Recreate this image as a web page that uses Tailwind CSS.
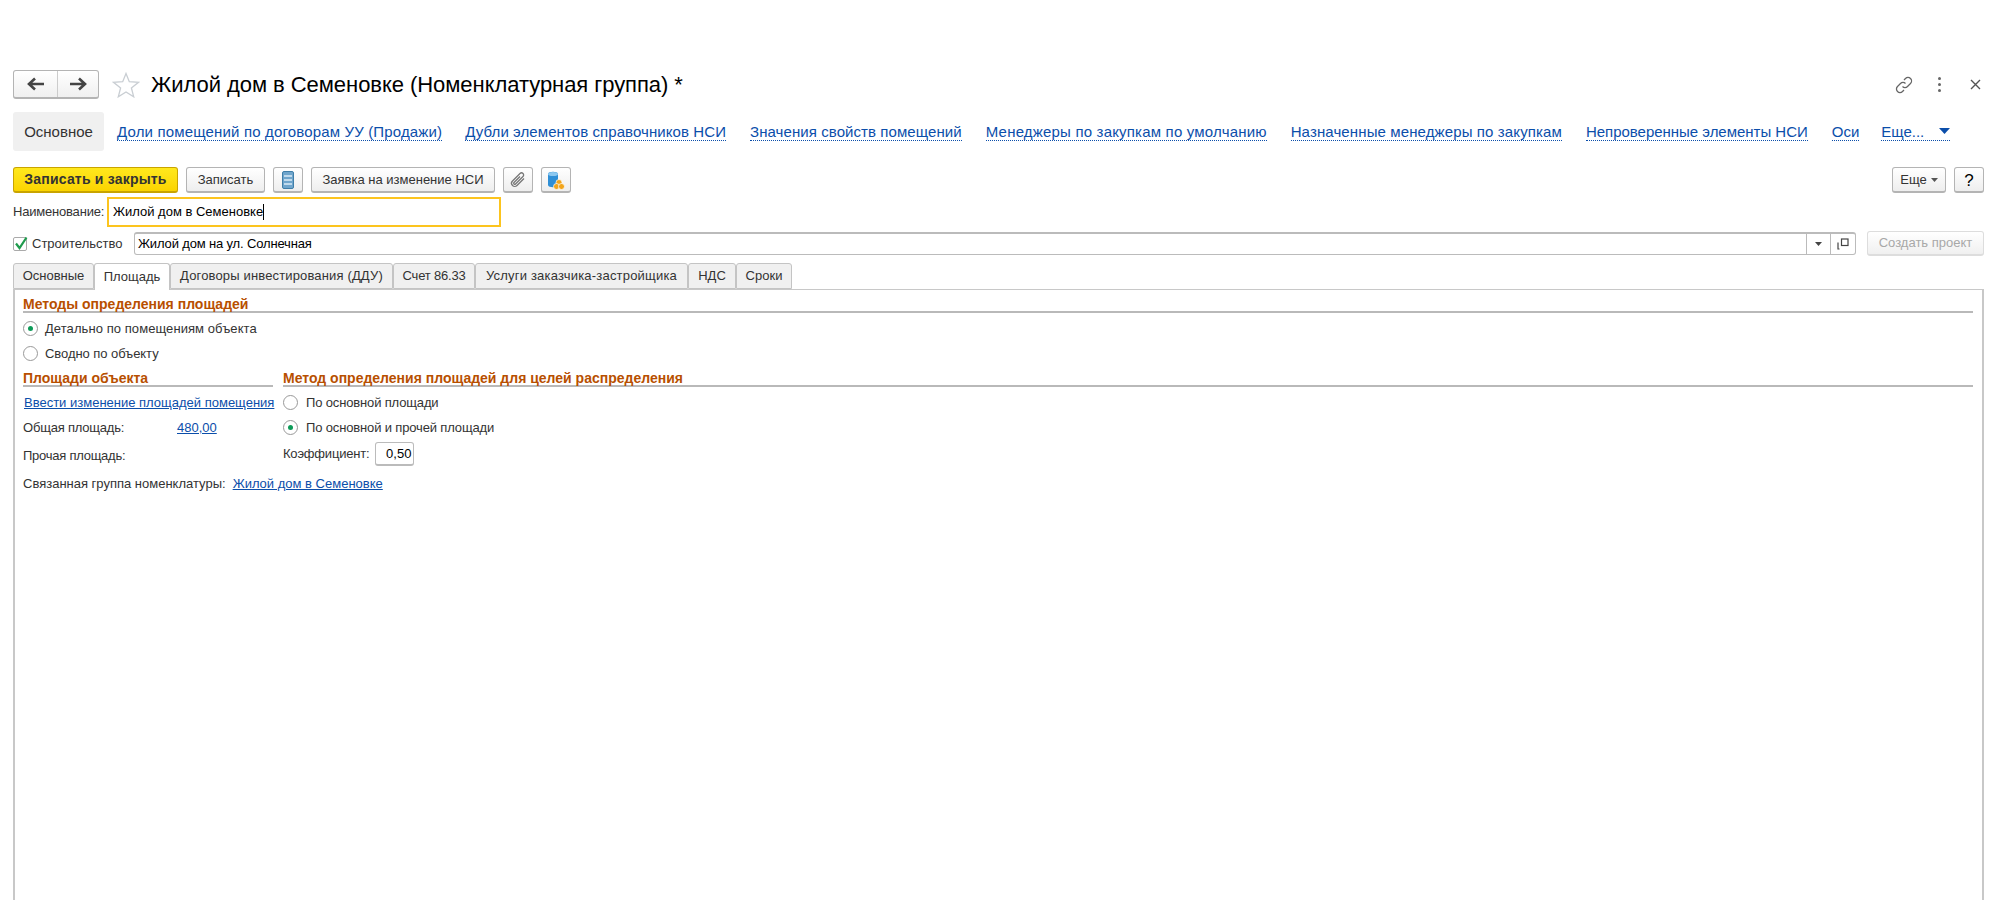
<!DOCTYPE html>
<html>

<head>
  <title>Жилой дом в Семеновке</title>
  <script src="https://cdn.jsdelivr.net/npm/@tailwindcss/browser@4"></script>
</head>

<body class="h-[900px] overflow-hidden bg-white font-['Liberation_Sans',Arial,sans-serif] text-[#333]">
  <div class="flex h-[900px] flex-col pl-[13px] pr-[16px] pt-[70px]">

    <!-- header -->
    <div class="flex h-[29px] items-center">
      <div class="flex h-[29px] w-[86px] rounded-[3px] border border-b-2 border-[#b4b4b4] bg-gradient-to-b from-white to-[#f0f0f0]">
        <div class="flex w-[44px] items-center justify-center border-r border-[#ccc]">
          <svg width="18" height="14" viewBox="0 0 18 14"><path d="M8 1.500 2 7l6 5.500M2.500 7H17" fill="none" stroke="#444" stroke-width="2.600"/></svg>
        </div>
        <div class="flex flex-1 items-center justify-center">
          <svg width="18" height="14" viewBox="0 0 18 14"><path d="M10 1.500 16 7l-6 5.500M15.500 7H1" fill="none" stroke="#444" stroke-width="2.600"/></svg>
        </div>
      </div>
      <svg class="ml-[13px]" width="28" height="26" viewBox="0 0 28 26"><path d="M14 1.500 17.300 9.700 26.500 10.300 19.400 16 21.700 24.800 14 20 6.300 24.800 8.600 16 1.500 10.300 10.700 9.700Z" fill="#fff" stroke="#c9ced3" stroke-width="1.300"/></svg>
      <h1 class="ml-[11px] text-[22px] leading-none tracking-[-0.055px] text-black">Жилой дом в Семеновке (Номенклатурная группа) *</h1>
      <div class="ml-auto mr-[3px] flex items-center">
        <svg width="20" height="20" viewBox="0 0 20 20" fill="none" stroke="#666" stroke-width="1.300"><path d="M8.500 11.500a3.500 3.500 0 0 0 5 0l3-3a3.500 3.500 0 0 0-5-5l-1.500 1.500"/><path d="M11.500 8.500a3.500 3.500 0 0 0-5 0l-3 3a3.500 3.500 0 0 0 5 5l1.500-1.500"/></svg>
        <div class="ml-[24px] flex w-[3px] flex-col gap-[3px]">
          <span class="h-[3px] w-[3px] rounded-full bg-[#666]"></span>
          <span class="h-[3px] w-[3px] rounded-full bg-[#666]"></span>
          <span class="h-[3px] w-[3px] rounded-full bg-[#666]"></span>
        </div>
        <svg class="ml-[29px]" width="11" height="11" viewBox="0 0 11 11"><path d="M1 1l9 9M10 1l-9 9" stroke="#555" stroke-width="1.400"/></svg>
      </div>
    </div>

    <!-- section links -->
    <div class="mt-[13px] flex h-[39px] items-center text-[15px] text-[#0b4eaa]">
      <div class="flex h-[39px] w-[91px] items-center justify-center rounded-[3px] bg-[#f0f0f0] pt-px text-[#333]">Основное</div>
      <a class="ml-[13px] border-b border-dotted border-[#0b4eaa] leading-[17px] tracking-[0.16px]">Доли помещений по договорам УУ (Продажи)</a>
      <a class="ml-[23px] border-b border-dotted border-[#0b4eaa] leading-[17px] tracking-[0.08px]">Дубли элементов справочников НСИ</a>
      <a class="ml-[24px] border-b border-dotted border-[#0b4eaa] leading-[17px] tracking-[0.08px]">Значения свойств помещений</a>
      <a class="ml-[24px] border-b border-dotted border-[#0b4eaa] leading-[17px] tracking-[0.19px]">Менеджеры по закупкам по умолчанию</a>
      <a class="ml-[24px] border-b border-dotted border-[#0b4eaa] leading-[17px] tracking-[0.12px]">Назначенные менеджеры по закупкам</a>
      <a class="ml-[24px] border-b border-dotted border-[#0b4eaa] leading-[17px] tracking-[-0.02px]">Непроверенные элементы НСИ</a>
      <a class="ml-[24px] border-b border-dotted border-[#0b4eaa] leading-[17px]">Оси</a>
      <a class="ml-[22px] flex w-[69px] items-center justify-between border-b border-dotted border-[#0b4eaa] leading-[17px]">Еще...
        <svg width="11" height="6" viewBox="0 0 11 6"><path d="M0 0h11L5.500 6Z" fill="#0b4eaa"/></svg>
      </a>
    </div>

    <!-- command bar -->
    <div class="mt-[16px] flex h-[26px] items-stretch gap-[8px] text-[13px]">
      <button class="w-[165px] rounded-[3px] border border-b-2 border-[#c9a400] bg-gradient-to-b from-[#ffe81c] to-[#fbd400] text-[14px] font-bold tracking-[0.2px] text-[#333]">Записать и закрыть</button>
      <button class="w-[79px] rounded-[3px] border border-b-2 border-[#b4b4b4] bg-gradient-to-b from-white to-[#eee]">Записать</button>
      <button class="flex w-[30px] items-center justify-center rounded-[3px] border border-b-2 border-[#b4b4b4] bg-gradient-to-b from-white to-[#eee]">
        <svg width="12" height="18" viewBox="0 0 12 18"><rect x=".5" y=".5" width="11" height="17" rx="1.500" fill="#6fa5cc" stroke="#3f7ea8"/><path d="M2 5h8M2 9h8M2 13h8" stroke="#dcecf6" stroke-width="1.500"/></svg>
      </button>
      <button class="w-[184px] rounded-[3px] border border-b-2 border-[#b4b4b4] bg-gradient-to-b from-white to-[#eee]">Заявка на изменение НСИ</button>
      <button class="flex w-[30px] items-center justify-center rounded-[3px] border border-b-2 border-[#b4b4b4] bg-gradient-to-b from-white to-[#eee]">
        <svg width="18" height="18" viewBox="0 0 18 18"><path d="M15 7.500 8 14.500a3 3 0 0 1-4.500-4.500l7.500-7.500a2 2 0 0 1 3 3L6.500 13a1 1 0 0 1-1.500-1.500L11 5.500" fill="none" stroke="#777" stroke-width="1.300"/></svg>
      </button>
      <button class="flex w-[30px] items-center justify-center rounded-[3px] border border-b-2 border-[#b4b4b4] bg-gradient-to-b from-white to-[#eee]">
        <svg width="20" height="20" viewBox="0 0 20 20"><path d="M2 4c0-3 10-3 10 0v11c0 3-10 3-10 0Z" fill="#2f8fd6"/><ellipse cx="7" cy="4" rx="5" ry="2" fill="#8cc8f0"/><circle cx="13" cy="12.500" r="3" fill="#f2a51c" stroke="#fff" stroke-width=".7"/><circle cx="10.500" cy="16.500" r="3" fill="#f2a51c" stroke="#fff" stroke-width=".7"/><circle cx="15.500" cy="16.500" r="3" fill="#f2a51c" stroke="#fff" stroke-width=".7"/></svg>
      </button>
      <button class="ml-auto flex w-[54px] items-center justify-center gap-[4px] rounded-[3px] border border-b-2 border-[#b4b4b4] bg-gradient-to-b from-white to-[#eee]">Еще
        <svg width="7" height="4" viewBox="0 0 7 4"><path d="M0 0h7L3.500 4Z" fill="#555"/></svg>
      </button>
      <button class="w-[30px] rounded-[3px] border border-b-2 border-[#b4b4b4] bg-gradient-to-b from-white to-[#eee] text-[17px] text-black">?</button>
    </div>

    <!-- name -->
    <div class="mt-[4px] flex h-[30px] items-center text-[13px]">
      <label class="w-[94px] tracking-[-0.2px]">Наименование:</label>
      <div class="flex h-[30px] w-[394px] items-center border-2 border-[#fcc41e] px-[4px] text-black">Жилой дом в Семеновке<span class="h-[16px] w-px bg-black"></span></div>
    </div>

    <!-- construction -->
    <div class="mt-[5px] flex h-[23px] items-center text-[13px]">
      <svg width="16" height="16" viewBox="0 0 16 16"><rect x=".5" y="1.500" width="13" height="13" rx="1.500" fill="#fff" stroke="#aaa"/><path d="M3 7.500 6.500 12 13.500 1.500" fill="none" stroke="#1f9b4d" stroke-width="2.200"/></svg>
      <label class="ml-[3px] w-[102px]">Строительство</label>
      <div class="flex h-[23px] w-[1722px] items-stretch rounded-[3px] border border-t-2 border-[#bbb] text-black">
        <span class="flex-1 px-[3px] leading-[20px] tracking-[-0.15px]">Жилой дом на ул. Солнечная</span>
        <div class="flex w-[24px] items-center justify-center border-l border-[#bbb]">
          <svg width="7" height="4" viewBox="0 0 7 4"><path d="M0 0h7L3.500 4Z" fill="#444"/></svg>
        </div>
        <div class="flex w-[25px] items-center justify-center border-l border-[#bbb]">
          <svg width="12" height="12" viewBox="0 0 12 12" fill="none" stroke="#444" stroke-width="1.200"><rect x="4.500" y="1" width="6.500" height="6.500"/><path d="M1 4.500V11H2.500"/></svg>
        </div>
      </div>
      <button class="ml-[11px] h-[25px] w-[117px] rounded-[3px] border border-b-2 border-[#ddd] bg-gradient-to-b from-white to-[#f0f0f0] text-[#a8a8a8]">Создать проект</button>
    </div>

    <!-- tabs -->
    <div class="relative z-10 mt-[8px] flex h-[27px] text-[13px]">
      <div class="flex h-[26px] w-[81px] items-center justify-center rounded-t-[3px] border border-[#c4c4c4] bg-[#f0f0f0]">Основные</div>
      <div class="flex h-[27px] w-[76px] items-center justify-center rounded-t-[3px] border border-b-0 border-[#c4c4c4] bg-white">Площадь</div>
      <div class="flex h-[26px] w-[223px] items-center justify-center rounded-t-[3px] border border-[#c4c4c4] bg-[#f0f0f0] tracking-[0.15px]">Договоры инвестирования (ДДУ)</div>
      <div class="flex h-[26px] w-[82px] items-center justify-center rounded-t-[3px] border border-[#c4c4c4] bg-[#f0f0f0] tracking-[-0.2px]">Счет 86.33</div>
      <div class="flex h-[26px] w-[213px] items-center justify-center rounded-t-[3px] border border-[#c4c4c4] bg-[#f0f0f0] tracking-[0.2px]">Услуги заказчика-застройщика</div>
      <div class="flex h-[26px] w-[48px] items-center justify-center rounded-t-[3px] border border-[#c4c4c4] bg-[#f0f0f0]">НДС</div>
      <div class="flex h-[26px] w-[56px] items-center justify-center rounded-t-[3px] border border-[#c4c4c4] bg-[#f0f0f0]">Сроки</div>
    </div>

    <!-- page -->
    <div class="-mt-px flex-1 border-x-2 border-t border-[#c8c8c8] pl-[8px] pr-[9px] text-[13px]">
      <h2 class="h-[23px] border-b-2 border-[#b9b9b9] pt-[7px] text-[14px] font-bold leading-[14px] text-[#b84f00]">Методы определения площадей</h2>
      <div class="mt-[3px] flex h-[25px] items-center">
        <span class="flex h-[15px] w-[15px] items-center justify-center rounded-full border border-[#999] bg-white"><span class="h-[5px] w-[5px] rounded-full bg-[#0d9b58]"></span></span>
        <span class="ml-[7px] tracking-[0.07px]">Детально по помещениям объекта</span>
      </div>
      <div class="flex h-[25px] items-center">
        <span class="h-[15px] w-[15px] rounded-full border border-[#999] bg-white"></span>
        <span class="ml-[7px] tracking-[-0.06px]">Сводно по объекту</span>
      </div>
      <div class="mt-[3px] flex gap-[10px]">
        <div class="w-[250px]">
          <h2 class="h-[18px] border-b-2 border-[#b9b9b9] pt-[2px] text-[14px] font-bold leading-[14px] text-[#b84f00]">Площади объекта</h2>
          <div class="mt-[3px] flex h-[25px] items-center pl-px">
            <a class="whitespace-nowrap text-[#0b4eaa] underline">Ввести изменение площадей помещения</a>
          </div>
          <div class="flex h-[25px] items-center">
            <span class="w-[154px] tracking-[-0.2px]">Общая площадь:</span><a class="text-[#0b4eaa] underline">480,00</a>
          </div>
          <div class="flex h-[31px] items-center tracking-[-0.25px]">Прочая площадь:</div>
        </div>
        <div class="flex-1">
          <h2 class="h-[18px] border-b-2 border-[#b9b9b9] pt-[2px] text-[14px] font-bold leading-[14px] text-[#b84f00]">Метод определения площадей для целей распределения</h2>
          <div class="mt-[3px] flex h-[25px] items-center">
            <span class="h-[15px] w-[15px] rounded-full border border-[#999] bg-white"></span>
            <span class="ml-[8px] tracking-[-0.15px]">По основной площади</span>
          </div>
          <div class="flex h-[25px] items-center">
            <span class="flex h-[15px] w-[15px] items-center justify-center rounded-full border border-[#999] bg-white"><span class="h-[5px] w-[5px] rounded-full bg-[#0d9b58]"></span></span>
            <span class="ml-[8px] tracking-[-0.15px]">По основной и прочей площади</span>
          </div>
          <div class="mt-[2px] flex h-[24px] items-center">
            <span class="tracking-[-0.2px]">Коэффициент:</span>
            <span class="ml-[6px] flex h-[24px] w-[39px] items-center justify-end rounded-[3px] border border-b-2 border-[#bbb] pr-[2px] text-black">0,50</span>
          </div>
        </div>
      </div>
      <div class="flex h-[26px] items-center">
        <span>Связанная группа номенклатуры:</span>
        <a class="ml-[7px] text-[#0b4eaa] underline">Жилой дом в Семеновке</a>
      </div>
    </div>
  </div>
</body>

</html>
